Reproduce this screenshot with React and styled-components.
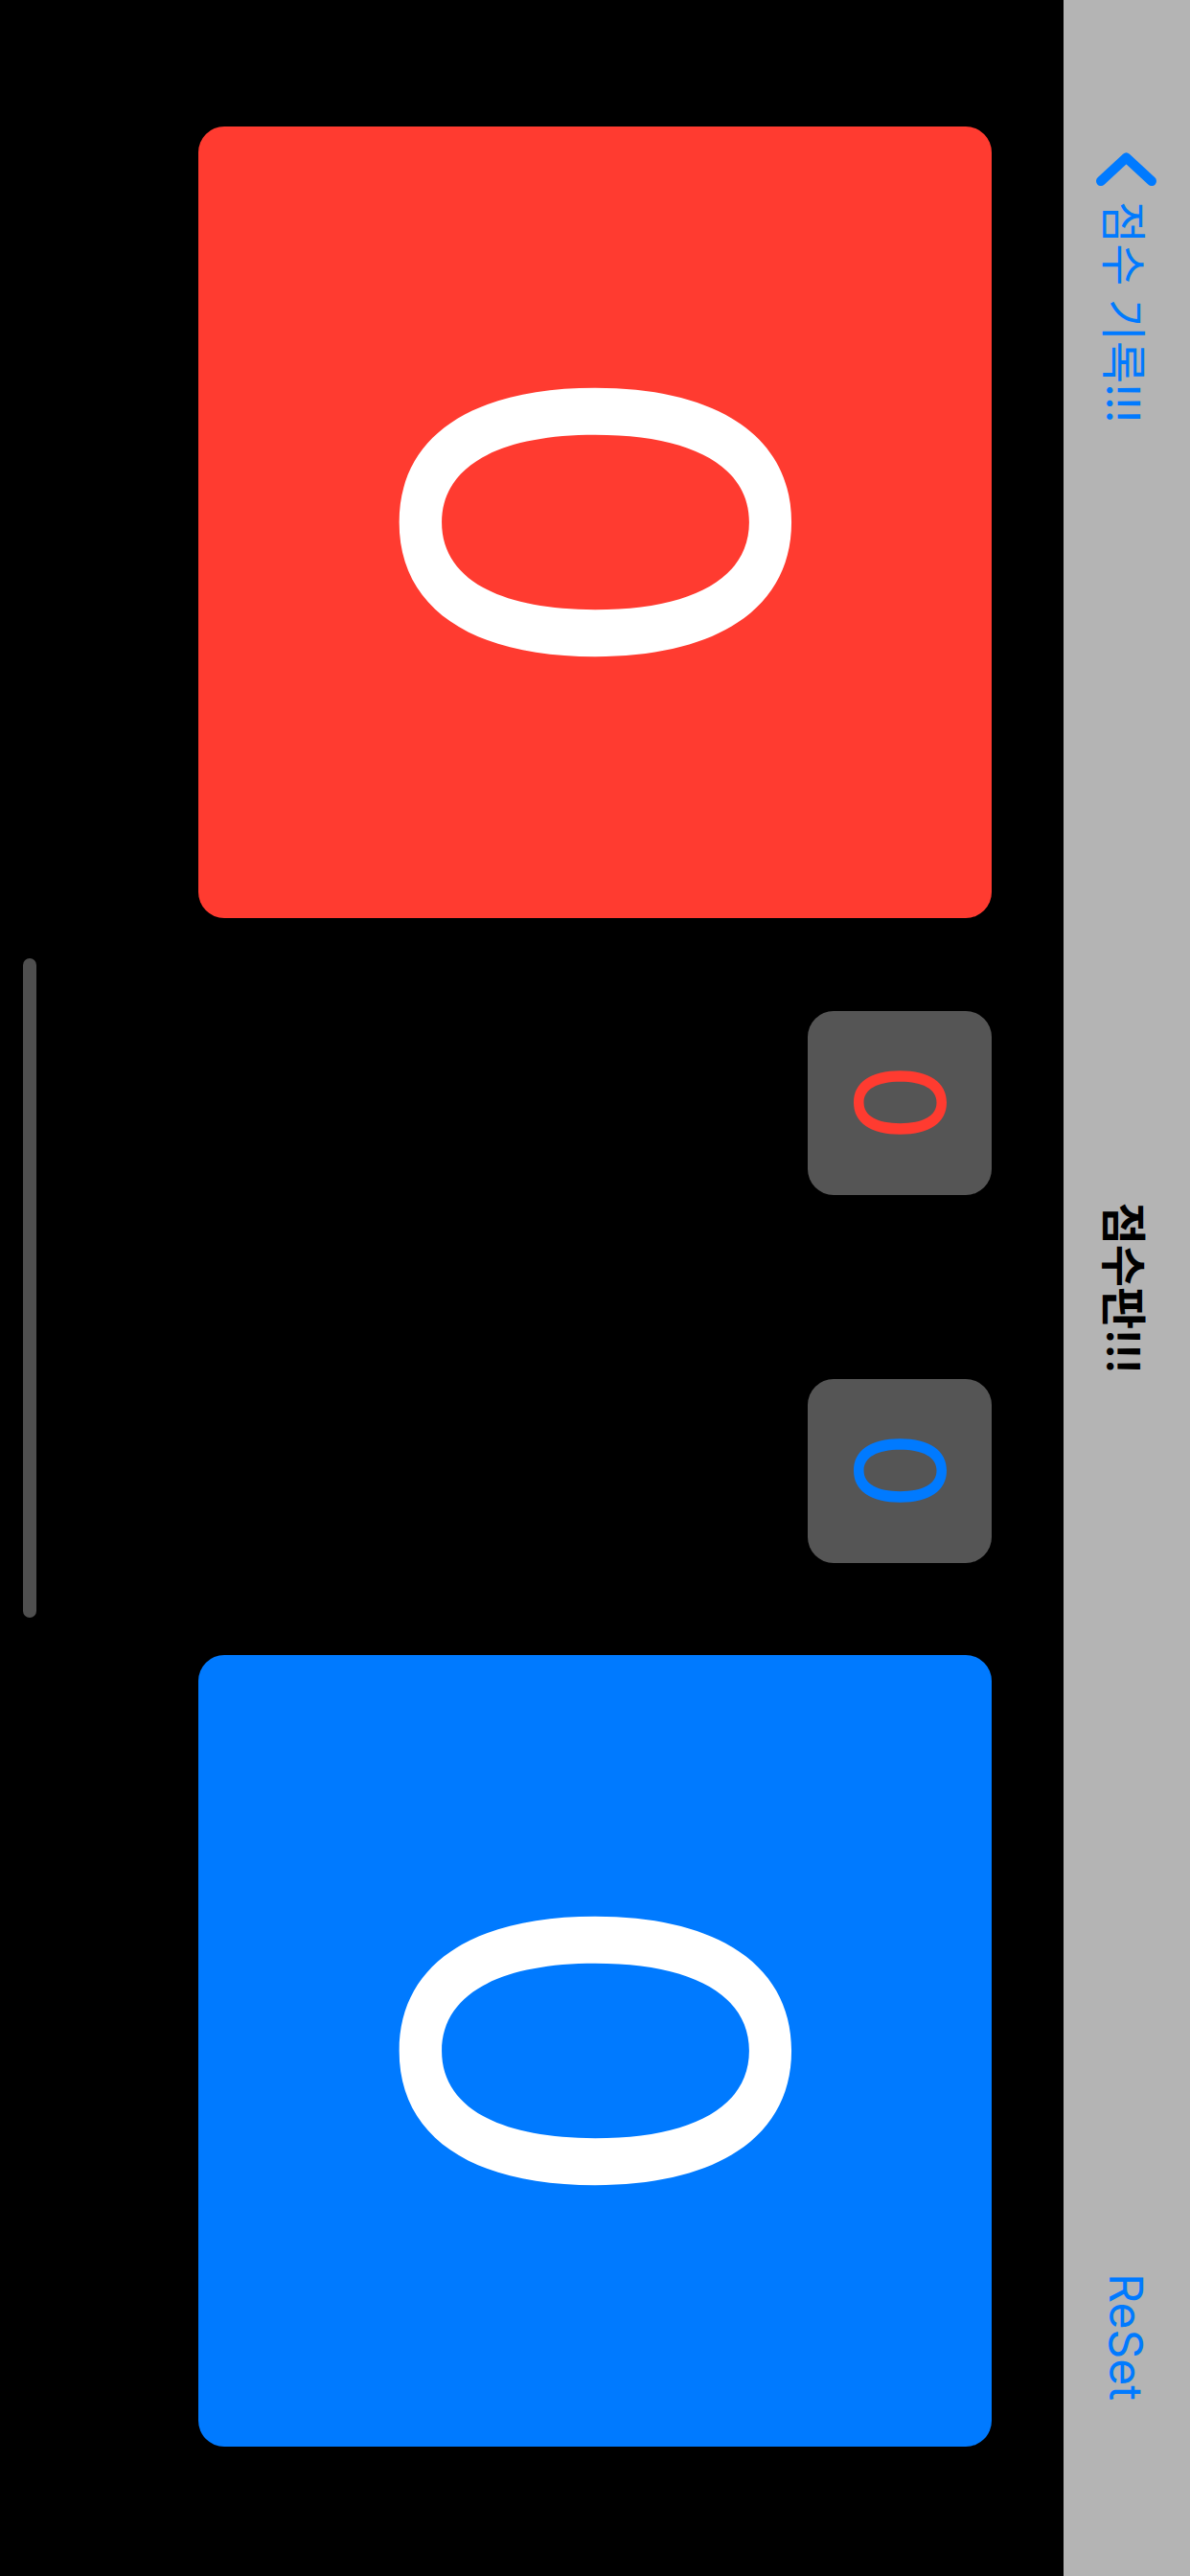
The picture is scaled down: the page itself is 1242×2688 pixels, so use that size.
import styled, { createGlobalStyle } from 'styled-components';

const GlobalStyle = createGlobalStyle`
  html, body {
    margin: 0;
    padding: 0;
    background: #000;
    overflow: hidden;
  }
  body {
    width: 1242px;
    height: 2688px;
    font-family: Inter, "Noto Sans CJK KR", sans-serif;
  }
`;

// the app runs in landscape; the stage is laid out as 2688x1242 and turned onto the portrait capture
const Stage = styled.div`
  width: 2688px;
  height: 1242px;
  display: flex;
  flex-direction: column;
  background: #000;
  transform-origin: 0 0;
  transform: translateX(1242px) rotate(90deg);
`;

const NavBar = styled.header`
  height: 132px;
  flex: none;
  padding: 0 132px;
  display: grid;
  grid-template-columns: 1fr auto 1fr;
  align-items: center;
  background: #b4b4b4;
  font-size: 48px;
`;

const BackButton = styled.button`
  justify-self: start;
  margin-left: 27px;
  display: flex;
  align-items: center;
  gap: 16px;
  padding: 0;
  border: none;
  background: none;
  font: inherit;
  color: #007aff;
`;

const Title = styled.h1`
  margin: 0;
  font-size: 48px;
  font-weight: 600;
  color: #000;
`;

const ResetButton = styled.button`
  justify-self: end;
  margin-right: 51px;
  padding: 0;
  border: none;
  background: none;
  font: inherit;
  color: #007aff;
`;

const Board = styled.main`
  flex: 1;
  display: flex;
  align-items: flex-start;
  padding: 75px 135px 0 132px;
`;

const ScoreCard = styled.button`
  width: 826px;
  height: 828px;
  flex: none;
  display: flex;
  align-items: center;
  justify-content: center;
  padding: 0;
  border: none;
  border-radius: 27px;
  background: ${(p) => p.$color};
  color: #fff;
  font-family: Inter, sans-serif;
  font-size: 548px;
  font-weight: 400;
  line-height: 1;
`;

const SideColumn = styled.div`
  flex: 1;
  display: flex;
  justify-content: center;
  gap: 192px;
`;

const MiniScore = styled.div`
  width: 192px;
  height: 192px;
  display: flex;
  align-items: center;
  justify-content: center;
  border-radius: 27px;
  background: #555;
  color: ${(p) => p.$color};
  font-family: Inter, sans-serif;
  font-size: 130px;
  line-height: 1;
`;

const Footer = styled.div`
  display: flex;
  justify-content: center;
  padding-bottom: 24px;
`;

const HomeIndicator = styled.div`
  width: 688px;
  height: 14px;
  border-radius: 7px;
  background: #4f4f4f;
`;

const RED = '#ff3b30';
const BLUE = '#007aff';

function Chevron() {
  return (
    <svg width="35" height="63" viewBox="0 0 35 63" fill="none">
      <path
        d="M30 5 L5.5 31.5 L30 58"
        stroke="currentColor"
        strokeWidth="10"
        strokeLinecap="round"
        strokeLinejoin="round"
      />
    </svg>
  );
}

export default function App() {
  const score = { red: 0, blue: 0 };

  return (
    <>
      <GlobalStyle />
      <Stage>
        <NavBar>
          <BackButton>
            <Chevron />
            점수 기록!!!
          </BackButton>
          <Title>점수판!!!</Title>
          <ResetButton>ReSet</ResetButton>
        </NavBar>
        <Board>
          <ScoreCard $color={RED}>{score.red}</ScoreCard>
          <SideColumn>
            <MiniScore $color={RED}>{score.red}</MiniScore>
            <MiniScore $color={BLUE}>{score.blue}</MiniScore>
          </SideColumn>
          <ScoreCard $color={BLUE}>{score.blue}</ScoreCard>
        </Board>
        <Footer>
          <HomeIndicator />
        </Footer>
      </Stage>
    </>
  );
}
